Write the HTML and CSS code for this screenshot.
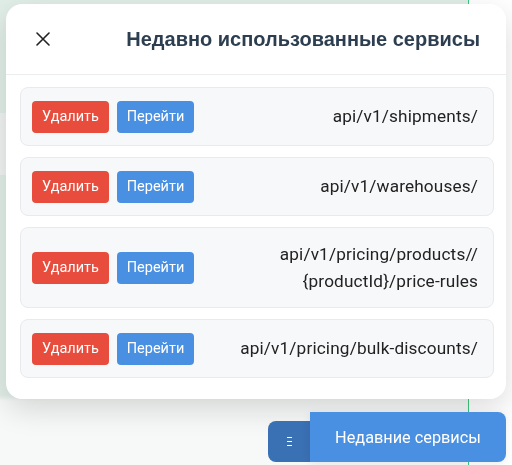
FILE: index.html
```html
<!DOCTYPE html>
<html lang="ru">
<head>
<meta charset="utf-8">
<title>Недавно использованные сервисы</title>
<link rel="stylesheet" href="styles.css">
</head>
<body>
<div class="page">
  <div class="side">
    <div class="band band-top"></div>
    <div class="band band-mid"></div>
    <div class="band band-low"></div>
  </div>
  <div class="rest"></div>
</div>

<div class="modal">
  <div class="modal-header">
    <button class="close" aria-label="Закрыть">
      <svg width="14" height="14" viewBox="0 0 14 14"><path d="M1 1L13 13M13 1L1 13" stroke="#222" stroke-width="1.6" fill="none" stroke-linecap="round"/></svg>
    </button>
    <h2 class="title">Недавно использованные сервисы</h2>
  </div>
  <div class="modal-body">
    <div class="item">
      <button class="btn btn-del">Удалить</button>
      <button class="btn btn-go">Перейти</button>
      <div class="url">api/v1/shipments/</div>
    </div>
    <div class="item">
      <button class="btn btn-del">Удалить</button>
      <button class="btn btn-go">Перейти</button>
      <div class="url">api/v1/warehouses/</div>
    </div>
    <div class="item">
      <button class="btn btn-del">Удалить</button>
      <button class="btn btn-go">Перейти</button>
      <div class="url">api/v1/pricing/products//<wbr>{productId}/price-rules</div>
    </div>
    <div class="item">
      <button class="btn btn-del">Удалить</button>
      <button class="btn btn-go">Перейти</button>
      <div class="url">api/v1/pricing/bulk-discounts/</div>
    </div>
  </div>
</div>

<div class="fab">
  <div class="fab-tab"><span class="bars"><i></i><i></i><i></i></span></div>
  <button class="fab-main">Недавние сервисы</button>
</div>
</body>
</html>
```

FILE: styles.css
```css
html, body {
  margin: 0;
  padding: 0;
  height: 100%;
}
body {
  background: #f8faf9;
  font-family: Roboto, "Liberation Sans", Arial, sans-serif;
  overflow: hidden;
}
.page {
  display: flex;
  height: 465px;
}
.side {
  width: 468px;
  border-right: 1px solid #3fc77f;
  display: flex;
  flex-direction: column;
}
.band-top {
  height: 113px;
  background: #e1ede7;
}
.band-mid {
  height: 62px;
  background: #eff2f1;
}
.band-low {
  flex: 1;
  background: linear-gradient(#e1ede7 0, #e1ede7 220px, #f7f9f8 226px);
}
.rest {
  flex: 1;
  background: #ffffff;
}

.modal {
  position: fixed;
  left: 6px;
  top: 4px;
  width: 500px;
  background: #fff;
  border-radius: 16px;
  box-shadow: 0 10px 30px rgba(0, 0, 0, 0.14);
}
.modal-header {
  height: 70px;
  border-bottom: 1px solid #ebeeef;
  display: flex;
  align-items: center;
  justify-content: space-between;
  padding: 0 26px 0 29px;
}
.close {
  border: 0;
  background: none;
  padding: 0;
  width: 16px;
  height: 16px;
  display: flex;
  align-items: center;
  justify-content: center;
  cursor: pointer;
}
.title {
  margin: 0;
  font-family: "Liberation Sans", Arial, sans-serif;
  font-weight: 700;
  font-size: 20px;
  color: #2c3e50;
}
.modal-body {
  padding: 12px 12px 21px 14px;
  display: flex;
  flex-direction: column;
  gap: 11px;
}
.item {
  display: flex;
  align-items: center;
  gap: 8px;
  padding: 12.5px 15px 12.5px 11px;
  background: #f7f8fa;
  border: 1px solid #e8eaed;
  border-radius: 8px;
}
.btn {
  height: 32px;
  width: 77px;
  padding: 0;
  border: 0;
  border-radius: 4px;
  color: #fff;
  font-family: Roboto, sans-serif;
  font-size: 14.5px;
  flex: none;
}
.btn-del { background: #e74c3c; }
.btn-go { background: #4a90e2; }
.url {
  flex: 1;
  min-width: 0;
  text-align: right;
  font-size: 17.2px;
  letter-spacing: 0.15px;
  line-height: 27px;
  color: #222;
  margin-left: 8px;
}

.fab {
  position: fixed;
  right: 6px;
  bottom: 3px;
  display: flex;
  align-items: flex-end;
}
.fab-tab {
  width: 42px;
  height: 41px;
  background: #3a70b4;
  border-radius: 8px 0 0 8px;
  display: flex;
  align-items: center;
  justify-content: center;
}
.bars {
  display: flex;
  flex-direction: column;
  gap: 3px;
}
.bars i {
  display: block;
  width: 5px;
  height: 1px;
  background: #fff;
}
.fab-main {
  width: 196px;
  height: 50px;
  border: 0;
  background: #4a90e2;
  border-radius: 0 8px 8px 0;
  color: #fff;
  font-family: Roboto, sans-serif;
  font-size: 16.3px;
  padding: 0;
  box-shadow: 0 2px 8px rgba(0, 0, 0, 0.08);
}
```
